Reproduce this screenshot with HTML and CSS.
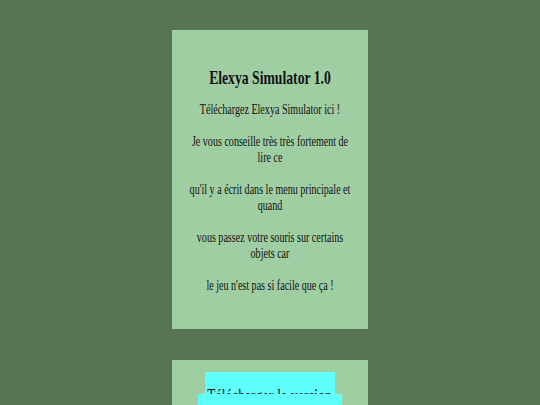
FILE: index.html
```html
<!DOCTYPE html>
<html lang="fr">
<head>
<meta charset="utf-8">
<title>Elexya Simulator</title>
<link rel="stylesheet" href="styles.css">
</head>
<body>
<main class="page">
  <section class="card">
    <div class="narrow">
      <h1 class="title">Elexya Simulator 1.0</h1>
      <p class="text">Téléchargez Elexya Simulator ici !</p>
      <p class="text">Je vous conseille très très fortement de lire ce</p>
      <p class="text">qu'il y a écrit dans le menu principale et quand</p>
      <p class="text">vous passez votre souris sur certains objets car</p>
      <p class="text">le jeu n'est pas si facile que ça !</p>
    </div>
  </section>
  <section class="card card-dl">
    <div class="dl-head"><span class="dl-label">Télécharger la version</span></div>
    <div class="dl-btn"></div>
  </section>
</main>
</body>
</html>
```

FILE: styles.css
```css
html, body {
  margin: 0;
  padding: 0;
}
body {
  background: #577453;
  height: 405px;
  overflow: hidden;
  font-family: "Liberation Serif", "Times New Roman", serif;
  color: #111;
}
.page {
  width: 196px;
  margin: 30px auto 0;
  display: flex;
  flex-direction: column;
  gap: 31px;
}
.card {
  background: #a0cea3;
  padding: 37px 18px 35px;
  text-align: center;
}
.narrow {
  width: 230px;
  margin-left: -35px;
  transform: scaleX(0.72);
  transform-origin: 50% 0;
}
.title {
  font-size: 19px;
  font-weight: bold;
  margin: 0 0 13px;
  line-height: 22px;
}
.text {
  font-size: 14px;
  line-height: 16px;
  margin: 0 0 16px;
}
.text:last-child {
  margin-bottom: 0;
}
.card-dl {
  padding: 12px 26px 20px;
}
.dl-head {
  background: #5ffffd;
  margin: 0 7px;
  height: 22px;
  padding-top: 12px;
  box-sizing: border-box;
  display: flex;
  justify-content: center;
}
.dl-label {
  flex: none;
  font-size: 20px;
  line-height: 24px;
  white-space: nowrap;
  letter-spacing: 0.5px;
  transform: scaleX(0.66);
}
.dl-btn {
  position: relative;
  background: #5ffffd;
  height: 30px;
}
```
